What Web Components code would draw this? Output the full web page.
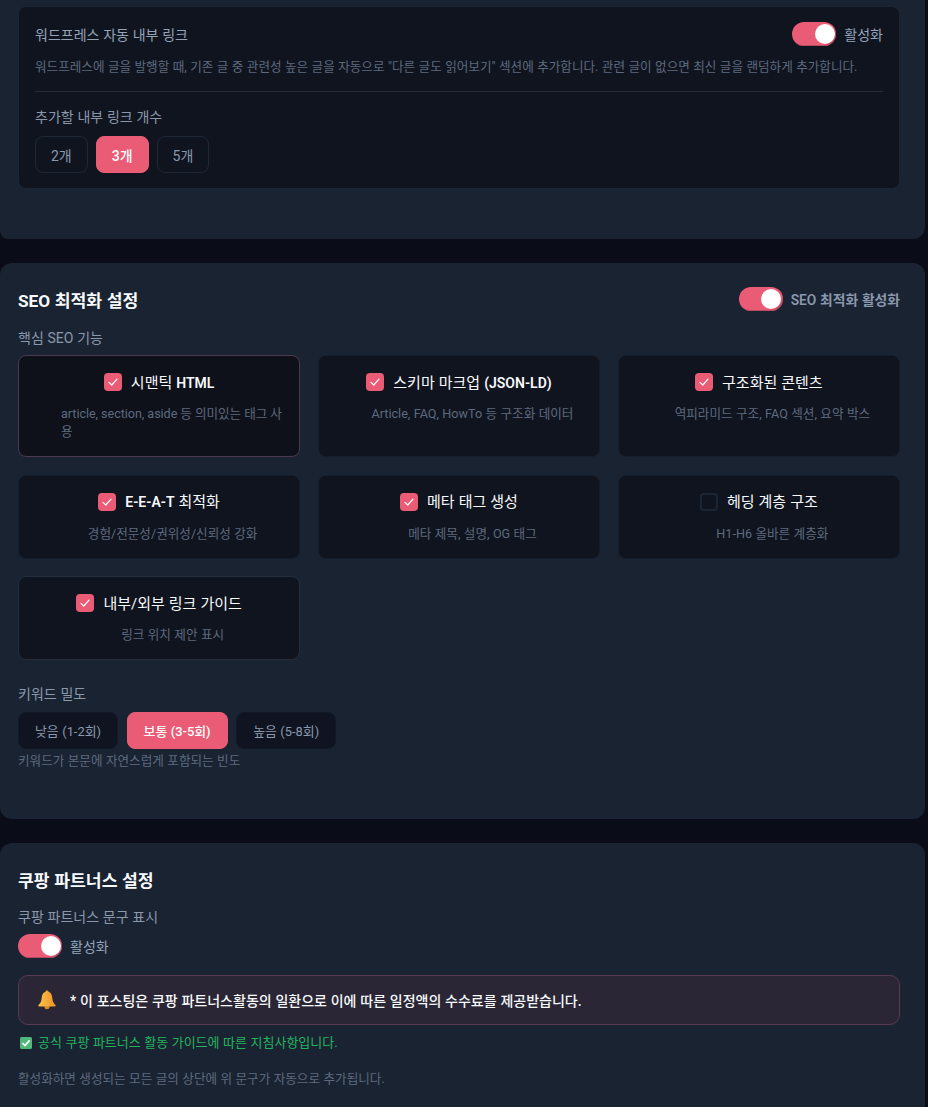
<!DOCTYPE html>
<html lang="ko">
<head>
<meta charset="utf-8">
<title>설정</title>
<style>
  html, body { margin: 0; height: 100%; overflow: hidden; background: #0a0d17; }
  body {
    font-family: Roboto, "Noto Sans CJK KR", sans-serif;
    word-spacing: .3px;
    color: #94a3b8;
  }
  main { width: 925px; display: flex; flex-direction: column; gap: 24px; }
  b { font-weight: 600; font-size: 14px; }
</style>
</head>
<body>
<main>
  <settings-panel cut>
    <sub-card>
      <div slot="head-text">워드프레스 자동 내부 링크</div>
      <toggle-switch slot="head-side" on>활성화</toggle-switch>
      <div slot="desc">워드프레스에 글을 발행할 때, 기존 글 중 관련성 높은 글을 자동으로 "다른 글도 읽어보기" 섹션에 추가합니다. 관련 글이 없으면 최신 글을 랜덤하게 추가합니다.</div>
      <field-label roomy>추가할 내부 링크 개수</field-label>
      <choice-group>
        <choice-button>2개</choice-button>
        <choice-button active>3개</choice-button>
        <choice-button>5개</choice-button>
      </choice-group>
    </sub-card>
  </settings-panel>

  <settings-panel heading="SEO 최적화 설정">
    <toggle-switch slot="side" on strong>SEO 최적화 활성화</toggle-switch>
    <field-label>핵심 SEO 기능</field-label>
    <feature-grid>
      <feature-card checked hovered><span slot="title">시맨틱 <b>HTML</b></span>article, section, aside 등 의미있는 태그 사용</feature-card>
      <feature-card checked><span slot="title">스키마 마크업 <b>(JSON-LD)</b></span>Article, FAQ, HowTo 등 구조화 데이터</feature-card>
      <feature-card checked><span slot="title">구조화된 콘텐츠</span>역피라미드 구조, FAQ 섹션, 요약 박스</feature-card>
      <feature-card checked><span slot="title"><b>E-E-A-T</b> 최적화</span>경험/전문성/권위성/신뢰성 강화</feature-card>
      <feature-card checked><span slot="title">메타 태그 생성</span>메타 제목, 설명, OG 태그</feature-card>
      <feature-card><span slot="title">헤딩 계층 구조</span>H1-H6 올바른 계층화</feature-card>
      <feature-card checked edged><span slot="title">내부/외부 링크 가이드</span>링크 위치 제안 표시</feature-card>
    </feature-grid>
    <field-label spaced>키워드 밀도</field-label>
    <choice-group wide>
      <choice-button plain>낮음 (1-2회)</choice-button>
      <choice-button active>보통 (3-5회)</choice-button>
      <choice-button plain>높음 (5-8회)</choice-button>
    </choice-group>
    <hint-text>키워드가 본문에 자연스럽게 포함되는 빈도</hint-text>
  </settings-panel>

  <settings-panel heading="쿠팡 파트너스 설정" tight>
    <field-label>쿠팡 파트너스 문구 표시</field-label>
    <toggle-switch on>활성화</toggle-switch>
    <notice-box>* 이 포스팅은 쿠팡 파트너스활동의 일환으로 이에 따른 일정액의 수수료를 제공받습니다.</notice-box>
    <guide-line>공식 쿠팡 파트너스 활동 가이드에 따른 지침사항입니다.</guide-line>
    <hint-text far>활성화하면 생성되는 모든 글의 상단에 위 문구가 자동으로 추가됩니다.</hint-text>
  </settings-panel>
</main>

<script>
class SettingsPanel extends HTMLElement {
  constructor() {
    super();
    const heading = this.getAttribute('heading');
    this.attachShadow({ mode: 'open' }).innerHTML = `
      <style>
        :host {
          display: block;
          background: #1a2332;
          border-radius: 12px;
          padding: 24px 25px 49px 18px;
          box-sizing: border-box;
        }
        :host([cut]) {
          border-radius: 0 0 12px 8px;
          padding-top: 6px;
          padding-bottom: 50px;
        }
        .head {
          display: flex;
          justify-content: space-between;
          align-items: center;
          height: 24px;
          margin-bottom: 18px;
        }
        :host([tight]) .head { margin-bottom: 17px; }
        h2 {
          margin: 0;
          font-size: 17.2px;
          font-weight: 700;
          color: #f8fafc;
        }
      </style>
      ${heading ? `<div class="head"><h2>${heading}</h2><slot name="side"></slot></div>` : ''}
      <slot></slot>
    `;
  }
}

class SubCard extends HTMLElement {
  constructor() {
    super();
    this.attachShadow({ mode: 'open' }).innerHTML = `
      <style>
        :host {
          display: block;
          background: #10141f;
          border: 1px solid #1c2534;
          border-radius: 8px;
          padding: 15px 16px;
        }
        .head {
          display: flex;
          justify-content: space-between;
          align-items: center;
          height: 24px;
          font-size: 14px;
          color: #94a3b8;
        }
        .desc {
          font-size: 12.6px;
          line-height: 18px;
          color: #5d6a7e;
          margin-top: 12px;
          padding-bottom: 15px;
          border-bottom: 1px solid #252d3b;
          margin-bottom: 16px;
        }
      </style>
      <div class="head"><slot name="head-text"></slot><slot name="head-side"></slot></div>
      <div class="desc"><slot name="desc"></slot></div>
      <slot></slot>
    `;
  }
}

class ToggleSwitch extends HTMLElement {
  constructor() {
    super();
    this.attachShadow({ mode: 'open' }).innerHTML = `
      <style>
        :host {
          display: flex;
          align-items: center;
          gap: 8px;
          width: fit-content;
          font-size: 14px;
          color: #94a3b8;
        }
        :host([strong]) { font-size: 13.8px; font-weight: 600; color: #8a98ac; }
        .track {
          position: relative;
          width: 44px;
          height: 24px;
          border-radius: 12px;
          background: #ea5c75;
          box-shadow: inset -1px -1px 0 #b84a60;
          flex: none;
        }
        .knob {
          position: absolute;
          top: 2px;
          right: 1.5px;
          width: 20px;
          height: 20px;
          border-radius: 50%;
          background: #fff;
        }
      </style>
      <span class="track"><span class="knob"></span></span>
      <slot></slot>
    `;
  }
}

class FieldLabel extends HTMLElement {
  constructor() {
    super();
    this.attachShadow({ mode: 'open' }).innerHTML = `
      <style>
        :host {
          display: block;
          font-size: 14px;
          line-height: 18px;
          color: #8a98ac;
          margin-bottom: 8px;
        }
        :host([roomy]) { margin-bottom: 10px; }
        :host([spaced]) { margin-top: 25px; margin-bottom: 9px; }
      </style>
      <slot></slot>
    `;
  }
}

class ChoiceGroup extends HTMLElement {
  constructor() {
    super();
    this.attachShadow({ mode: 'open' }).innerHTML = `
      <style>
        :host { display: flex; gap: 8px; --choice-font: 14px; --choice-pad: 15px; }
        :host([wide]) { gap: 8.5px; --choice-font: 12.9px; --choice-pad: 16px; }
      </style>
      <slot></slot>
    `;
  }
}

class ChoiceButton extends HTMLElement {
  constructor() {
    super();
    this.attachShadow({ mode: 'open' }).innerHTML = `
      <style>
        :host {
          display: flex;
          align-items: center;
          height: 37px;
          box-sizing: border-box;
          padding: 0 var(--choice-pad);
          border: 1px solid #1f2836;
          border-radius: 8px;
          background: #10141f;
          font-size: var(--choice-font);
          color: #8a98ac;
        }
        :host([plain]) { border-color: #121826; background: #0f1420; }
        :host([active]) {
          background: #ea5c75;
          border-color: #ea5c75;
          color: #fff;
          font-weight: 500;
        }
      </style>
      <slot></slot>
    `;
  }
}

class FeatureGrid extends HTMLElement {
  constructor() {
    super();
    this.attachShadow({ mode: 'open' }).innerHTML = `
      <style>
        :host {
          display: grid;
          grid-template-columns: repeat(3, 1fr);
          gap: 17.6px;
        }
      </style>
      <slot></slot>
    `;
  }
}

class FeatureCard extends HTMLElement {
  constructor() {
    super();
    this.attachShadow({ mode: 'open' }).innerHTML = `
      <style>
        :host {
          display: flex;
          flex-direction: column;
          align-items: center;
          box-sizing: border-box;
          min-width: 0;
          padding: 16px 15px 15px;
          border: 1px solid #161e2b;
          border-radius: 8px;
          background: #10141f;
        }
        :host([edged]) { border-color: #252e3d; }
        :host([hovered]) { background: #0f111a; border-color: #4a3a4d; }
        .title {
          display: flex;
          align-items: center;
          gap: 9px;
          height: 20px;
          font-size: 15px;
          font-weight: 400;
          color: #f8fafc;
        }
        .label { padding-bottom: 2px; }
        .box {
          flex: none;
          width: 18px;
          height: 18px;
          box-sizing: border-box;
          border-radius: 4px;
          display: flex;
          align-items: center;
          justify-content: center;
          border: 2px solid #1c2534;
        }
        :host([checked]) .box { background: #ea5c75; border: 0; }
        svg { display: none; }
        :host([checked]) svg { display: block; }
        .desc {
          margin-top: 13px;
          padding-left: 27px;
          font-size: 12.6px;
          line-height: 18px;
          color: #5d6a7e;
        }
        :host([hovered]) .desc { word-spacing: 0; letter-spacing: -.05px; }
      </style>
      <div class="title">
        <span class="box"><svg width="12" height="12" viewBox="0 0 12 12" fill="none" stroke="#fff" stroke-width="1.2" stroke-linecap="round" stroke-linejoin="round"><path d="M2 6.4 4.800 9 10 3.200"/></svg></span>
        <span class="label"><slot name="title"></slot></span>
      </div>
      <div class="desc"><slot></slot></div>
    `;
  }
}

class HintText extends HTMLElement {
  constructor() {
    super();
    this.attachShadow({ mode: 'open' }).innerHTML = `
      <style>
        :host {
          display: block;
          margin-top: 3px;
          font-size: 12.6px;
          line-height: 18px;
          color: #5d6a7e;
        }
        :host([far]) { margin-top: 18px; }
      </style>
      <slot></slot>
    `;
  }
}

class NoticeBox extends HTMLElement {
  constructor() {
    super();
    this.attachShadow({ mode: 'open' }).innerHTML = `
      <style>
        :host {
          display: flex;
          align-items: center;
          gap: 14px;
          height: 50px;
          box-sizing: border-box;
          margin-top: 17px;
          padding: 0 19px;
          background: #2a2635;
          border: 1px solid #5a3a50;
          border-radius: 10px;
          font-size: 14px;
          font-weight: 500;
          color: #f8fafc;
        }
        svg { flex: none; }
      </style>
      <svg width="18" height="20" viewBox="0 0 18 20">
        <defs><linearGradient id="bell" x1="0" y1="0" x2="1" y2="0"><stop offset="0" stop-color="#fbc04a"/><stop offset="1" stop-color="#ee9428"/></linearGradient></defs>
        <circle cx="9" cy="1.800" r="1.500" fill="#e8a02c"/>
        <ellipse cx="9" cy="17" rx="2.600" ry="2.200" fill="#d98a25"/>
        <path d="M9 1.800C5.200 1.800 4 4.500 3.700 8c-.3 3.200-1.100 5-3 6.800-.7.700-.4 1.800.7 1.800h15.200c1.100 0 1.400-1.100.7-1.800-1.900-1.800-2.700-3.600-3-6.800C14 4.500 12.800 1.800 9 1.800Z" fill="url(#bell)"/>
      </svg>
      <span><slot></slot></span>
    `;
  }
}

class GuideLine extends HTMLElement {
  constructor() {
    super();
    this.attachShadow({ mode: 'open' }).innerHTML = `
      <style>
        :host {
          display: flex;
          align-items: center;
          gap: 6px;
          margin-top: 9px;
          padding-left: 2px;
          font-size: 13px;
          line-height: 18px;
          color: #22b35e;
        }
        svg { flex: none; }
      </style>
      <svg width="12" height="12" viewBox="0 0 12 12">
        <rect width="12" height="12" rx="1.500" fill="#4fb878"/>
        <path d="M2.500 6.200 5 8.600 9.600 3.400" fill="none" stroke="#fff" stroke-width="1.700"/>
      </svg>
      <span><slot></slot></span>
    `;
  }
}

customElements.define('settings-panel', SettingsPanel);
customElements.define('sub-card', SubCard);
customElements.define('toggle-switch', ToggleSwitch);
customElements.define('field-label', FieldLabel);
customElements.define('choice-group', ChoiceGroup);
customElements.define('choice-button', ChoiceButton);
customElements.define('feature-grid', FeatureGrid);
customElements.define('feature-card', FeatureCard);
customElements.define('hint-text', HintText);
customElements.define('notice-box', NoticeBox);
customElements.define('guide-line', GuideLine);
</script>
</body>
</html>
